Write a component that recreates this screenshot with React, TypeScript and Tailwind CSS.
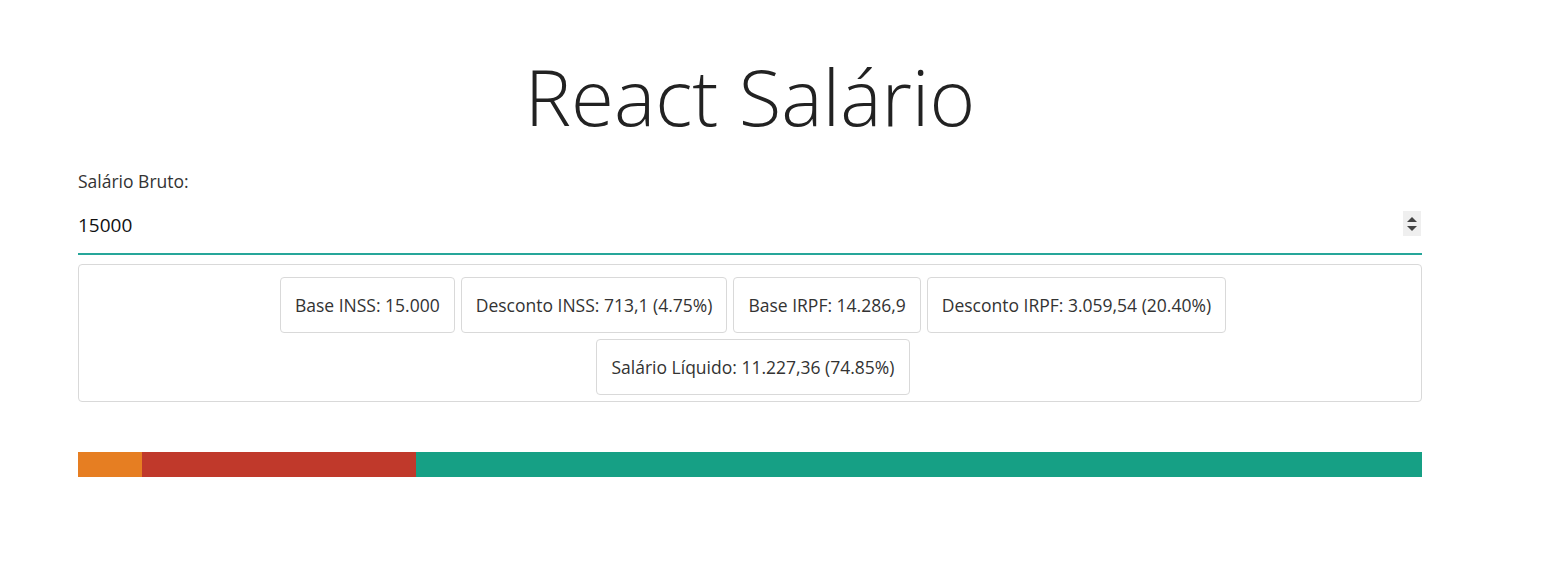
import React from "react";

function Chip({ children }: { children: React.ReactNode }) {
  return (
    <div className="ml-[6px] h-[56px] flex items-center px-[14px] border border-[#d9d9d9] rounded-[4px] text-[17.5px] text-[#333] whitespace-nowrap">
      {children}
    </div>
  );
}

export default function App() {
  return (
    <div className="w-[1555px] h-[569px] bg-white font-['Open_Sans',sans-serif] text-[#222]">
      <div className="ml-[78px] w-[1344px] flex flex-col">
        <h1 className="mt-[50px] h-[92px] flex items-center justify-center text-[78px] font-light leading-none text-[#222]">
          React Salário
        </h1>
        <label className="mt-[29px] text-[17.5px] leading-[20px] text-[#333]">Salário Bruto:</label>
        <div className="relative mt-[9px] h-[55px] border-b-2 border-[#26a69a] flex items-start">
          <input
            type="text"
            defaultValue="15000"
            className="w-full h-[49px] outline-none bg-transparent text-[19px] text-[#111] p-0"
          />
          <div className="absolute right-[1px] top-[11px] w-[18px] h-[25px] bg-[#efefef] flex flex-col items-center justify-center gap-[4px]">
            <svg width="10" height="5" viewBox="0 0 10 5"><path d="M0 5 L5 0 L10 5 Z" fill="#444" /></svg>
            <svg width="10" height="5" viewBox="0 0 10 5"><path d="M0 0 L10 0 L5 5 Z" fill="#444" /></svg>
          </div>
        </div>
        <div className="mt-[9px] border border-[#d9d9d9] rounded-[4px] pt-[12px] pb-[6px] px-[40px] flex flex-wrap justify-center gap-y-[6px]">
          <Chip>Base INSS: 15.000</Chip>
          <Chip>Desconto INSS: 713,1 (4.75%)</Chip>
          <Chip>Base IRPF: 14.286,9</Chip>
          <Chip>Desconto IRPF: 3.059,54 (20.40%)</Chip>
          <Chip>Salário Líquido: 11.227,36 (74.85%)</Chip>
        </div>
        <div className="mt-[50px] h-[25px] flex">
          <div className="h-full bg-[#e67e22]" style={{ width: "4.75%" }} />
          <div className="h-full bg-[#c0392b]" style={{ width: "20.40%" }} />
          <div className="h-full bg-[#16a085]" style={{ width: "74.85%" }} />
        </div>
      </div>
    </div>
  );
}
